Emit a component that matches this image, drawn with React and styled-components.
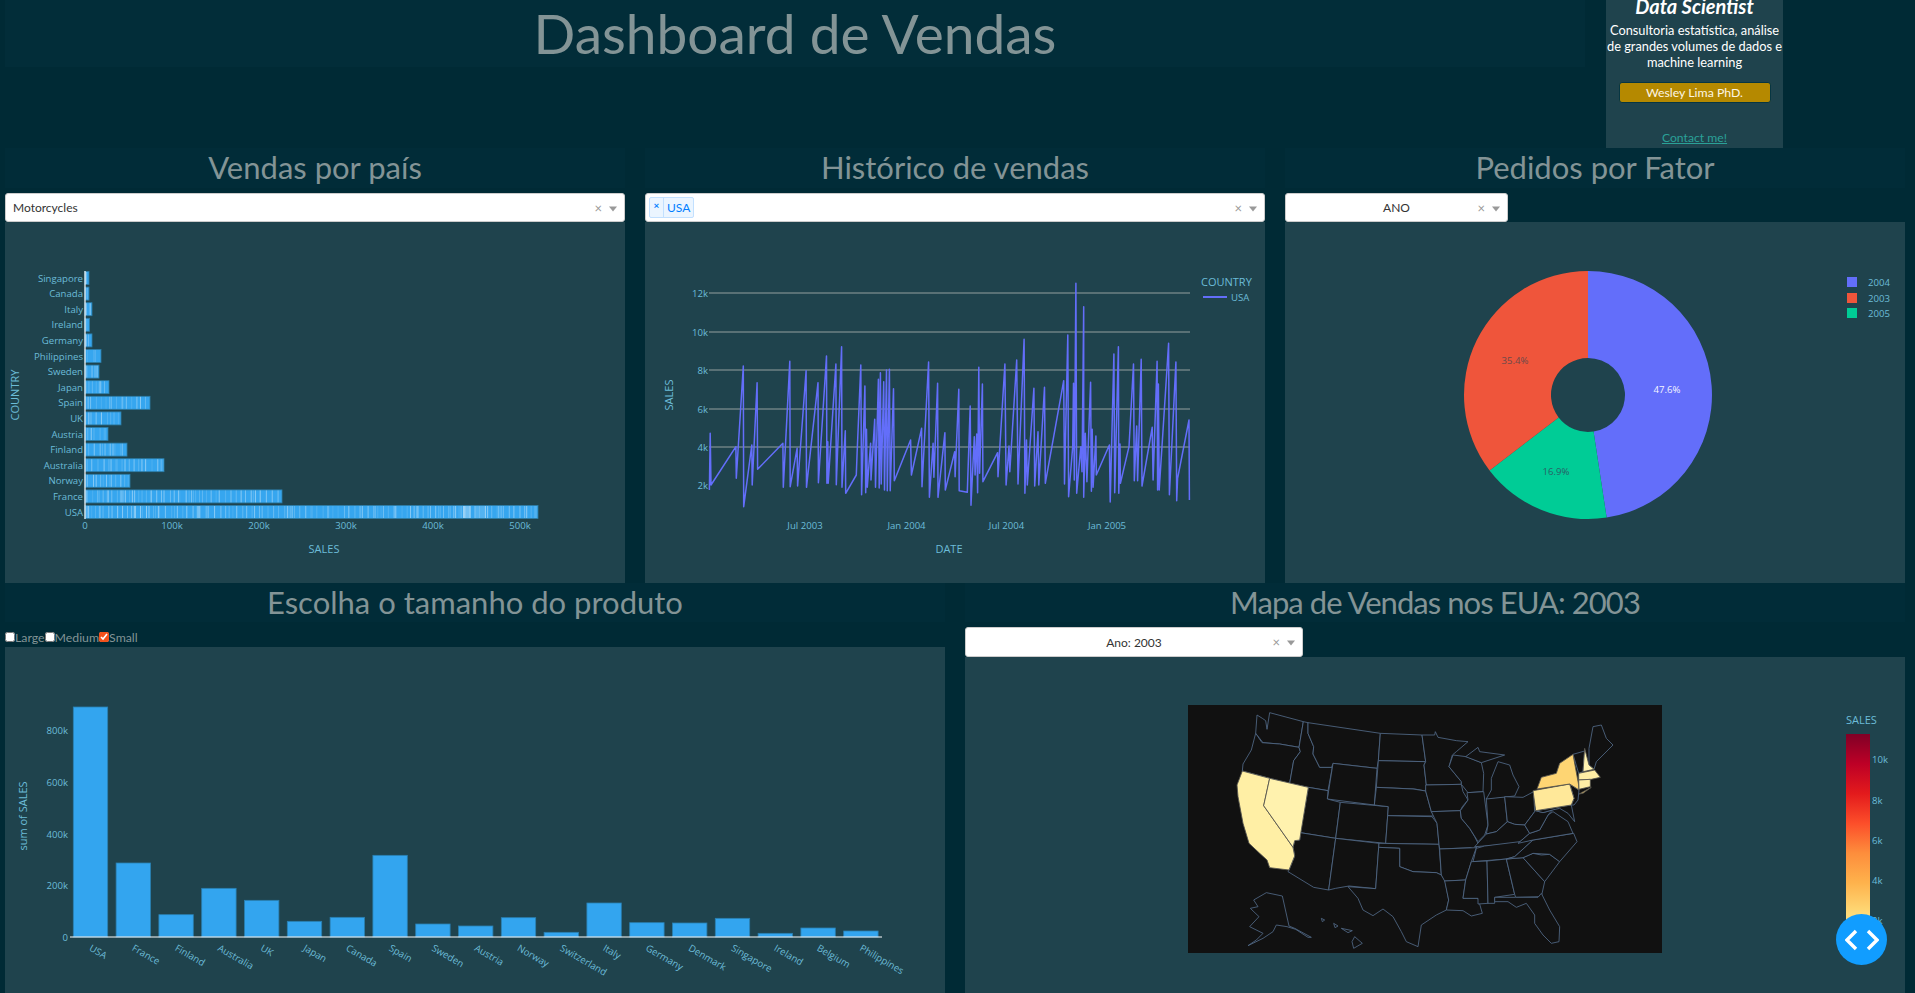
import styled, { createGlobalStyle } from "styled-components";

const GlobalStyle = createGlobalStyle`
  html, body {
    margin: 0;
    height: 993px;
    overflow: hidden;
    background: #002a35;
  }
`;

const Page = styled.div`
  width: 1915px;
  height: 993px;
  box-sizing: border-box;
  padding: 0 10px 0 5px;
  overflow: hidden;
  font-family: "Lato", "Open Sans", sans-serif;
`;
const HeaderRow = styled.header`
  display: flex;
  align-items: flex-start;
  height: 148px;
`;
const TitleBlock = styled.div`
  width: 1580px;
  height: 67px;
  background: #022d39;
  text-align: center;
`;
const Title = styled.h1`
  margin: 0;
  font-size: 55px;
  line-height: 66px;
  font-weight: 400;
  color: #839496;
`;
const ProfileCard = styled.aside`
  margin-left: 21px;
  width: 177px;
  height: 148px;
  background: #1f434d;
  overflow: hidden;
  display: flex;
  flex-direction: column;
  align-items: center;
  color: #fff;
`;
const ProfileName = styled.h3`
  margin: -5px 0 0;
  height: 22px;
  font-size: 20px;
  line-height: 22px;
  font-weight: 700;
  font-style: italic;
`;
const ProfileText = styled.p`
  margin: 5px -4px 0;
  font-size: 12.8px;
  line-height: 16px;
  text-align: center;
  white-space: nowrap;
`;
const ProfileButton = styled.button`
  margin-top: 12px;
  width: 152px;
  height: 21px;
  padding: 0;
  background: #b58900;
  border: 1px solid #073642;
  border-radius: 3px;
  color: #fdf6e3;
  font-family: inherit;
  font-size: 12.3px;
`;
const ContactLink = styled.a`
  margin-top: 25px;
  font-size: 12.2px;
  line-height: 20px;
  color: #2aa198;
  text-decoration: underline;
`;

const TopRow = styled.section`
  display: grid;
  grid-template-columns: 620px 620px 620px;
  column-gap: 20px;
`;
const BottomRow = styled.section`
  display: grid;
  grid-template-columns: 940px 940px;
  column-gap: 20px;
`;
const SectionTitle = styled.h2`
  margin: 0 0 5px;
  height: ${(p) => p.$height || 40}px;
  background: #012c38;
  font-size: 31px;
  line-height: 39px;
  font-weight: 400;
  letter-spacing: ${(p) => p.$spacing || 0}px;
  text-align: center;
  color: #839496;
`;
const Select = styled.div`
  position: relative;
  box-sizing: border-box;
  width: ${(p) => p.$width || "100%"};
  height: ${(p) => p.$height || 29}px;
  display: flex;
  align-items: center;
  padding: 0 7px;
  background: #fff;
  border: 1px solid #ccc;
  border-radius: 3px;
  color: #333;
  font-size: 12px;
`;
const SelectValue = styled.span`
  flex: 1;
  text-align: ${(p) => (p.$center ? "center" : "left")};
`;
const SelectControls = styled.span`
  position: absolute;
  right: 7px;
  top: 50%;
  transform: translateY(-50%);
  display: flex;
  align-items: center;
  gap: 7px;
`;
const ClearMark = styled.span`
  color: #999;
  font-size: 13px;
  line-height: 13px;
`;
const Caret = styled.span`
  width: 0;
  height: 0;
  margin-top: 2px;
  border-style: solid;
  border-width: 5px 4px 0;
  border-color: #999 transparent transparent;
`;
const Tag = styled.span`
  display: flex;
  height: 21px;
  margin-left: -4px;
  box-sizing: border-box;
  align-items: center;
  background: #ebf5ff;
  border: 1px solid #c2e0ff;
  border-radius: 2px;
  color: #007eff;
`;
const TagClose = styled.span`
  width: 13px;
  height: 100%;
  border-right: 1px solid #c2e0ff;
  text-align: center;
  font-size: 10px;
  font-weight: 700;
  line-height: 15px;
`;
const TagLabel = styled.span`
  padding: 0 3px;
  font-size: 12px;
`;
const Panel = styled.div`
  height: ${(p) => p.$height}px;
  background: #1f434d;
`;
const ChartSvg = styled.svg`
  display: block;
  width: 100%;
  height: 100%;
`;
const ChartText = styled.text`
  font-family: "Open Sans", sans-serif;
  font-size: ${(p) => p.$size || 9.6}px;
  fill: ${(p) => p.$fill || "#6cbcd8"};
  dominant-baseline: central;
`;
const Checklist = styled.div`
  display: flex;
  align-items: center;
  height: 20px;
  color: #839496;
  font-size: 12.3px;
`;
const CheckItem = styled.label`
  display: flex;
  align-items: center;
`;
const CheckBox = styled.input`
  width: 10px;
  height: 10px;
  margin: 0;
  accent-color: #f1511b;
`;
const DebugButton = styled.div`
  position: fixed;
  left: 1836px;
  top: 914px;
  width: 51px;
  height: 51px;
  border-radius: 50%;
  background: #119dff;
  display: flex;
  align-items: center;
  justify-content: center;
`;

// valores lidos do screenshot, em px
const countries = [
  ["Singapore", 4], ["Canada", 4], ["Italy", 7], ["Ireland", 4.5], ["Germany", 7],
  ["Philippines", 16], ["Sweden", 14], ["Japan", 24], ["Spain", 65], ["UK", 36],
  ["Austria", 23], ["Finland", 42], ["Australia", 79], ["Norway", 45], ["France", 197], ["USA", 453],
];

const productBars = [
  ["USA", 351], ["France", 819], ["Finland", 974], ["Australia", 895], ["UK", 931],
  ["Japan", 994], ["Canada", 982], ["Spain", 796], ["Sweden", 1002], ["Austria", 1008],
  ["Norway", 983], ["Switzerland", 1027], ["Italy", 939], ["Germany", 998], ["Denmark", 999],
  ["Singapore", 985], ["Ireland", 1030], ["Belgium", 1014], ["Philippines", 1023],
];

const lineRaw = [
  170,1020,172,850,174,1005,235,890,236,985,253,648,254,1070,274,885,275,1005,287,698,288,958,350,880,351,1012,
  367,634,368,1010,385,895,386,1008,407,662,408,1012,436,698,437,998,457,618,458,1000,460,875,461,1000,480,642,
  481,1004,494,590,495,1012,503,842,504,1030,530,975,532,910,541,645,543,1034,551,708,553,1028,555,838,557,1012,
  565,880,566,990,575,808,577,1012,584,688,586,1014,589,668,591,1002,597,695,599,1020,604,660,606,1022,
  611,658,613,1022,621,716,623,992,663,870,665,975,690,835,
  691,1010,707,636,709,1042,718,880,720,982,729,700,730,1042,747,848,748,1020,771,905,772,980,781,718,782,1022,
  802,1027,809,768,811,1066,819,860,821,975,825,852,827,1028,830,652,832,970,839,702,840,995,876,908,877,980,
  894,642,897,1005,904,888,906,965,923,630,926,1002,941,568,943,1030,947,870,949,1005,965,715,967,1008,975,845,
  977,1005,991,712,993,1000,1038,692,1040,1002,1048,555,1050,1040,1060,890,1062,700,1064,990,1068,400,1070,1030,
  1080,890,1083,965,1087,470,1087,1042,1091,850,1095,995,1104,697,1106,1024,1108,838,1110,1012,1117,858,1118,975,
  1150,885,1152,1056,1161,612,1163,1028,1172,590,1173,1030,1176,882,1177,1000,1198,890,1209,642,1211,992,1217,828,
  1219,992,1228,628,1230,1008,1255,832,1257,990,1267,634,1268,1020,1270,702,1272,1020,1295,580,1297,1034,1313,636,
  1315,1052,1317,985,1345,810,1346,1050,
];
const linePoints = [];
for (let i = 0; i < lineRaw.length; i += 2) {
  linePoints.push(`${(640 + lineRaw[i] / 2.45).toFixed(1)},${(150 + lineRaw[i + 1] / 3).toFixed(1)}`);
}

function seeded(seed) {
  let s = seed;
  return () => {
    s = (s * 16807) % 2147483647;
    return s / 2147483647;
  };
}

function CountryBars() {
  const rand = seeded(4211);
  return (
    <ChartSvg viewBox="5 222 620 361">
      {countries.map(([name, w], i) => {
        const y = 278 + i * 15.6;
        const lines = [];
        for (let x = 1 + rand() * 3; x < w - 1; x += 1 + rand() * 5.5) {
          lines.push(<line key={x} x1={85 + x} x2={85 + x} y1={y - 6} y2={y + 6} stroke="#fff" strokeOpacity={0.1 + rand() * 0.35} />);
        }
        return (
          <g key={name}>
            <rect x={85} y={y - 6.5} width={w} height={13} fill="#36a6ef" stroke="#2d7da6" strokeWidth={0.8} />
            {lines}
            <ChartText x={83} y={y} textAnchor="end">{name}</ChartText>
          </g>
        );
      })}
      <rect x={463} y={506} width={8} height={12} fill="#fff" fillOpacity={0.3} />
      <rect x={475} y={506} width={11} height={12} fill="#fff" fillOpacity={0.15} />
      <line x1={85} x2={85} y1={271} y2={519} stroke="#fff" strokeWidth={1.2} />
      {["0", "100k", "200k", "300k", "400k", "500k"].map((t, i) => (
        <ChartText key={t} x={85 + i * 87} y={525} textAnchor="middle">{t}</ChartText>
      ))}
      <ChartText x={324} y={548} textAnchor="middle" $size={11}>SALES</ChartText>
      <ChartText x={14} y={395} textAnchor="middle" $size={11} transform="rotate(-90 14 395)">COUNTRY</ChartText>
    </ChartSvg>
  );
}

function SalesLine() {
  const grid = [["12k", 293], ["10k", 332], ["8k", 370], ["6k", 409], ["4k", 447]];
  const ticks = [["Jul 2003", 805], ["Jan 2004", 906.5], ["Jul 2004", 1006.5], ["Jan 2005", 1107]];
  return (
    <ChartSvg viewBox="645 222 620 361">
      {grid.map(([t, y]) => (
        <g key={t}>
          <line x1={709} x2={1190} y1={y} y2={y} stroke="#94a09f" />
          <ChartText x={708} y={y} textAnchor="end">{t}</ChartText>
        </g>
      ))}
      <ChartText x={708} y={485} textAnchor="end">2k</ChartText>
      <polyline points={linePoints.join(" ")} fill="none" stroke="#636efa" strokeWidth={1.5} strokeLinejoin="round" />
      {ticks.map(([t, x]) => (
        <ChartText key={t} x={x} y={525} textAnchor="middle">{t}</ChartText>
      ))}
      <ChartText x={949} y={548} textAnchor="middle" $size={11}>DATE</ChartText>
      <ChartText x={668} y={395} textAnchor="middle" $size={11} transform="rotate(-90 668 395)">SALES</ChartText>
      <ChartText x={1201} y={281} $size={11}>COUNTRY</ChartText>
      <line x1={1203} x2={1227} y1={297} y2={297} stroke="#636efa" strokeWidth={2} />
      <ChartText x={1231} y={297}>USA</ChartText>
    </ChartSvg>
  );
}

function donutSlice(from, to, cx, cy, r, hole) {
  const pt = (f, rad) => {
    const a = f * Math.PI * 2;
    return `${(cx + rad * Math.sin(a)).toFixed(2)} ${(cy - rad * Math.cos(a)).toFixed(2)}`;
  };
  const large = to - from > 0.5 ? 1 : 0;
  return `M${pt(from, r)} A${r} ${r} 0 ${large} 1 ${pt(to, r)} L${pt(to, hole)} A${hole} ${hole} 0 ${large} 0 ${pt(from, hole)} Z`;
}

function OrdersDonut() {
  const slices = [
    ["#636efa", 0, 0.476],
    ["#00cc96", 0.476, 0.646],
    ["#ef553b", 0.646, 1],
  ];
  const legend = [["2004", "#636efa", 282], ["2003", "#ef553b", 298], ["2005", "#00cc96", 313]];
  return (
    <ChartSvg viewBox="1285 222 620 361">
      {slices.map(([color, a, b]) => (
        <path key={color} d={donutSlice(a, b, 1588, 395, 124, 37)} fill={color} />
      ))}
      <ChartText x={1667} y={389} textAnchor="middle" $fill="#f4f5ff">47.6%</ChartText>
      <ChartText x={1515} y={360} textAnchor="middle" $fill="#6b4a4a">35.4%</ChartText>
      <ChartText x={1556} y={471} textAnchor="middle" $fill="#2a5f66">16.9%</ChartText>
      {legend.map(([t, color, y]) => (
        <g key={t}>
          <rect x={1847} y={y - 5} width={10} height={10} fill={color} />
          <ChartText x={1868} y={y}>{t}</ChartText>
        </g>
      ))}
    </ChartSvg>
  );
}

function ProductBars() {
  const baseline = 590 + 1041 / 3;
  const yTicks = [["800k", 730], ["600k", 782], ["400k", 834], ["200k", 885], ["0", 937]];
  return (
    <ChartSvg viewBox="5 647 940 360">
      {productBars.map(([name, top], i) => {
        const x = 73.3 + i * 42.8;
        const y = 590 + top / 3;
        return (
          <g key={name}>
            <rect x={x} y={y} width={34.4} height={baseline - y} fill="#33a5ef" stroke="#2a7fb0" strokeWidth={0.8} />
            <ChartText x={x + 17} y={947} transform={`rotate(30 ${x + 17} 947)`}>{name}</ChartText>
          </g>
        );
      })}
      <line x1={70} x2={882} y1={baseline} y2={baseline} stroke="#fff" />
      {yTicks.map(([t, y]) => (
        <ChartText key={t} x={68} y={y} textAnchor="end">{t}</ChartText>
      ))}
      <ChartText x={22} y={816} textAnchor="middle" $size={11} transform="rotate(-90 22 816)">sum of SALES</ChartText>
      <ChartText x={475} y={996} textAnchor="middle" $size={11}>COUNTRY</ChartText>
    </ChartSvg>
  );
}

// contornos dos estados, em coordenadas do recorte 3x
const plainStates = [
  "M232,75 L248,85 L258,92 L262,118 L270,68 L371,95 L358,172 L300,162 L250,158 L228,130 Z",
  "M228,130 L247,158 L300,162 L358,172 L362,185 L342,212 L330,280 L270,265 L188,243 L190,222 L215,180 Z",
  "M371,95 L385,98 L385,130 L402,170 L400,192 L420,232 L458,232 L445,302 L386,292 L330,280 L342,212 L362,185 L358,172 Z",
  "M385,98 L602,130 L596,212 L592,235 L460,220 L456,232 L420,232 L400,192 L402,170 L385,130 Z",
  "M460,220 L592,235 L584,345 L443,327 Z",
  "M445,302 L443,327 L482,337 L468,445 L362,428 L386,292 Z",
  "M362,428 L468,445 L447,600 L402,592 L325,545 L328,540 L345,498 L340,472 L345,452 L360,450 Z",
  "M482,337 L626,350 L618,460 L468,445 Z",
  "M468,445 L598,460 L588,596 L508,588 L468,595 L447,600 Z",
  "M602,130 L727,135 L738,215 L596,212 Z",
  "M596,212 L738,215 L733,225 L740,285 L738,303 L705,297 L590,292 Z",
  "M590,292 L700,297 L738,303 L755,365 L763,378 L624,377 L626,350 L584,345 Z",
  "M624,377 L757,380 L772,400 L778,463 L618,460 Z",
  "M598,460 L778,463 L785,555 L770,548 L700,545 L660,530 L660,475 L597,472 Z",
  "M597,472 L660,475 L660,530 L700,545 L770,548 L785,555 L796,572 L807,630 L800,660 L770,675 L725,705 L715,770 L680,755 L665,725 L640,680 L610,657 L580,677 L550,660 L535,625 L505,590 L588,596 Z",
  "M727,135 L765,135 L767,125 L775,142 L830,152 L865,155 L830,185 L818,195 L808,230 L845,275 L845,283 L740,285 L733,225 L738,215 Z",
  "M738,285 L845,283 L850,305 L865,330 L848,350 L842,362 L755,365 L738,303 Z",
  "M755,365 L842,362 L845,385 L870,415 L885,440 L895,460 L885,488 L875,473 L780,477 L778,463 L772,400 Z",
  "M780,477 L890,473 L875,515 L858,570 L795,573 L785,555 Z",
  "M795,573 L858,570 L850,625 L895,625 L908,670 L875,678 L850,662 L800,660 L807,630 Z",
  "M820,195 L860,200 L905,218 L912,250 L910,305 L865,308 L845,283 L845,275 L808,230 Z",
  "M862,308 L912,305 L925,405 L915,435 L895,455 L870,415 L845,385 L842,362 L865,330 Z",
  "M920,325 L975,320 L983,395 L950,425 L920,432 L925,405 Z",
  "M935,265 L955,215 L990,225 L1000,255 L1018,290 L1005,318 L920,327 L935,300 Z",
  "M858,200 L895,172 L900,185 L975,195 L905,218 Z",
  "M975,320 L1030,322 L1062,305 L1065,365 L1035,405 L1005,403 L983,395 Z",
  "M885,470 L920,432 L950,425 L983,395 L1005,403 L1035,405 L1050,430 L1015,460 L915,468 Z",
  "M880,515 L890,475 L915,468 L1060,450 L1005,500 L980,507 Z",
  "M875,515 L922,513 L925,640 L895,642 L895,625 L850,625 L858,570 Z",
  "M922,513 L980,507 L1005,613 L945,622 L945,640 L925,640 Z",
  "M980,507 L1030,503 L1095,575 L1085,620 L1008,622 L1005,613 Z",
  "M1030,503 L1060,490 L1085,495 L1110,493 L1140,515 L1095,575 Z",
  "M1005,500 L1060,450 L1182,430 L1192,455 L1140,515 L1110,493 L1060,490 L1030,503 L980,507 Z",
  "M945,622 L1008,622 L1075,622 L1085,610 L1110,660 L1140,710 L1138,755 L1115,760 L1090,735 L1065,700 L1065,675 L1040,640 L1010,652 L985,635 L945,635 Z",
  "M1015,460 L1050,430 L1080,420 L1105,375 L1120,365 L1165,395 L1180,430 L1060,450 Z",
  "M1035,405 L1065,365 L1068,362 L1090,368 L1118,360 L1105,375 L1080,420 L1050,430 Z",
  "M1068,362 L1175,345 L1185,395 L1165,370 L1140,355 L1118,360 L1090,368 Z",
  "M1170,282 L1198,300 L1195,330 L1183,345 L1175,345 L1183,325 Z",
  "M1180,193 L1215,183 L1210,245 L1197,250 Z",
  "M1228,175 L1240,110 L1265,105 L1280,145 L1300,165 L1250,215 L1243,238 L1228,225 Z",
  "M222,630 L260,608 L308,618 L328,708 L345,715 L395,742 L385,742 L348,718 L322,710 L290,705 L280,725 L250,745 L205,767 L230,750 L250,730 L210,710 L238,680 L212,655 L235,650 Z",
  "M425,685 L435,690 L428,695 Z",
  "M462,700 L475,708 L466,713 Z",
  "M485,715 L518,722 L505,728 Z",
  "M525,740 L548,760 L522,775 L517,755 Z",
];
const salesStates = [
  ["M188,243 L270,265 L252,347 L340,472 L345,498 L328,540 L270,533 L262,510 L240,490 L208,460 L190,400 L175,320 L172,285 Z", "#ffefa5"],
  ["M270,265 L386,292 L360,450 L345,452 L340,472 L252,347 Z", "#fff2ae"],
  ["M1060,302 L1170,282 L1183,325 L1175,345 L1068,362 Z", "#ffe899"],
  ["M1072,297 L1085,262 L1130,250 L1140,220 L1180,193 L1197,285 L1198,300 L1170,282 Z", "#fed573"],
  ["M1215,175 L1228,225 L1243,238 L1210,245 Z", "#fff3b0"],
  ["M1197,250 L1245,240 L1262,262 L1235,268 L1197,270 Z", "#ffeea5"],
  ["M1197,270 L1232,268 L1232,290 L1198,298 Z", "#ffeea5"],
  ["M1198,312 L1235,292 L1210,310 Z", "#fed573"],
];

function SalesMap() {
  const stops = ["#800026", "#bd0026", "#e31a1c", "#fc4e2a", "#fd8d3c", "#feb24c", "#fed976", "#ffeda0"];
  return (
    <ChartSvg viewBox="965 657 940 360">
      <defs>
        <linearGradient id="ylorrd" x1="0" y1="0" x2="0" y2="1">
          {stops.map((c, i) => (
            <stop key={c} offset={i / (stops.length - 1)} stopColor={c} />
          ))}
        </linearGradient>
      </defs>
      <rect x={1188} y={705} width={474} height={248} fill="#111" />
      <svg x={1188} y={705} width={474} height={248} viewBox="25 45 1422 744">
        {plainStates.map((d) => (
          <path key={d} d={d} fill="#111" stroke="#506784" strokeWidth={2.6} strokeLinejoin="round" />
        ))}
        {salesStates.map(([d, fill]) => (
          <path key={d} d={d} fill={fill} stroke="#55544e" strokeWidth={2.6} strokeLinejoin="round" />
        ))}
      </svg>
      <ChartText x={1846} y={719} $size={11}>SALES</ChartText>
      <rect x={1846} y={734} width={24} height={208} fill="url(#ylorrd)" />
      {[["10k", 759], ["8k", 800], ["6k", 840], ["4k", 880], ["2k", 920]].map(([t, y]) => (
        <ChartText key={t} x={1872} y={y}>{t}</ChartText>
      ))}
    </ChartSvg>
  );
}

function SelectBox({ width, height, center, children, value }) {
  return (
    <Select $width={width} $height={height}>
      {children}
      {value && <SelectValue $center={center}>{value}</SelectValue>}
      <SelectControls>
        <ClearMark>×</ClearMark>
        <Caret />
      </SelectControls>
    </Select>
  );
}

export default function App() {
  return (
    <Page>
      <GlobalStyle />
      <HeaderRow>
        <TitleBlock>
          <Title>Dashboard de Vendas</Title>
        </TitleBlock>
        <ProfileCard>
          <ProfileName>Data Scientist</ProfileName>
          <ProfileText>
            Consultoria estatística, análise
            <br />
            de grandes volumes de dados e
            <br />
            machine learning
          </ProfileText>
          <ProfileButton>Wesley Lima PhD.</ProfileButton>
          <ContactLink href="#">Contact me!</ContactLink>
        </ProfileCard>
      </HeaderRow>

      <TopRow>
        <div>
          <SectionTitle>Vendas por país</SectionTitle>
          <SelectBox value="Motorcycles" />
          <Panel $height={361}>
            <CountryBars />
          </Panel>
        </div>
        <div>
          <SectionTitle>Histórico de vendas</SectionTitle>
          <SelectBox>
            <Tag>
              <TagClose>×</TagClose>
              <TagLabel>USA</TagLabel>
            </Tag>
          </SelectBox>
          <Panel $height={361}>
            <SalesLine />
          </Panel>
        </div>
        <div>
          <SectionTitle>Pedidos por Fator</SectionTitle>
          <SelectBox width="223px" value="ANO" center />
          <Panel $height={361}>
            <OrdersDonut />
          </Panel>
        </div>
      </TopRow>

      <BottomRow>
        <div>
          <SectionTitle $height={39}>Escolha o tamanho do produto</SectionTitle>
          <Checklist>
            <CheckItem><CheckBox type="checkbox" />Large</CheckItem>
            <CheckItem><CheckBox type="checkbox" />Medium</CheckItem>
            <CheckItem><CheckBox type="checkbox" defaultChecked />Small</CheckItem>
          </Checklist>
          <Panel $height={360}>
            <ProductBars />
          </Panel>
        </div>
        <div>
          <SectionTitle $height={39} $spacing={-0.95}>Mapa de Vendas nos EUA: 2003</SectionTitle>
          <SelectBox width="338px" height={30} value="Ano: 2003" center />
          <Panel $height={360}>
            <SalesMap />
          </Panel>
        </div>
      </BottomRow>

      <DebugButton>
        <svg width="34" height="22" viewBox="0 0 34 22" fill="none" stroke="#fff" strokeWidth="3.4">
          <path d="M11 2 L2 11 L11 20" />
          <path d="M23 2 L32 11 L23 20" />
        </svg>
      </DebugButton>
    </Page>
  );
}
